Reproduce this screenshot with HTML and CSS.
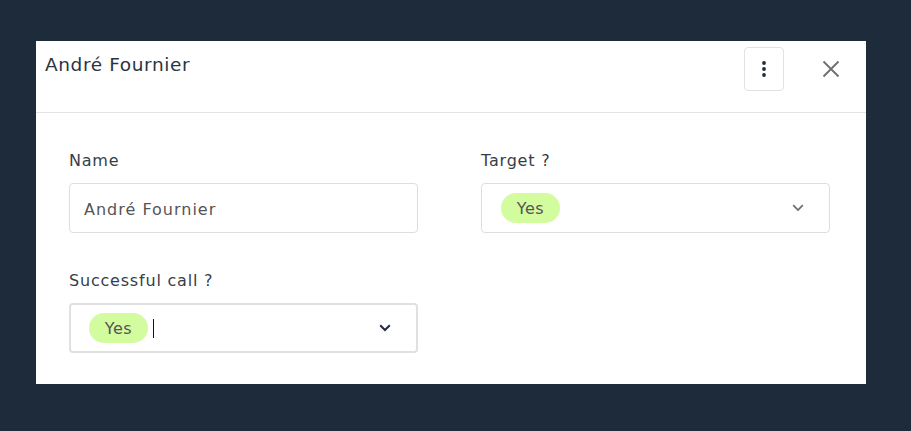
FILE: index.html
```html
<!DOCTYPE html>
<html lang="fr">
<head>
<meta charset="utf-8">
<title>André Fournier</title>
<link rel="stylesheet" href="styles.css">
</head>
<body>
<div class="modal">
  <header class="modal-header">
    <h1 class="modal-title">André Fournier</h1>
    <div class="header-actions">
      <button class="menu-btn" aria-label="More">
        <svg width="4" height="16" viewBox="0 0 4 16"><circle cx="2" cy="2" r="1.9" fill="#1f2d3d"/><circle cx="2" cy="8" r="1.9" fill="#1f2d3d"/><circle cx="2" cy="14" r="1.9" fill="#1f2d3d"/></svg>
      </button>
      <button class="close-btn" aria-label="Close">
        <svg width="18" height="18" viewBox="0 0 18 18"><path d="M1.5 1.5 L16.5 16.5 M16.5 1.5 L1.5 16.5" stroke="#6e6e6e" stroke-width="1.8" fill="none"/></svg>
      </button>
    </div>
  </header>
  <div class="modal-body">
    <div class="field">
      <label class="field-label">Name</label>
      <div class="input">André Fournier</div>
    </div>
    <div class="field">
      <label class="field-label">Target ?</label>
      <div class="input select">
        <span class="pill">Yes</span>
        <svg class="chevron" width="12" height="8" viewBox="0 0 12 8"><path d="M1.2 1.2 L6 6 L10.8 1.2" stroke="#6a6a6a" stroke-width="1.7" fill="none"/></svg>
      </div>
    </div>
    <div class="field">
      <label class="field-label">Successful call ?</label>
      <div class="input select focused">
        <span class="pill">Yes</span><span class="caret"></span>
        <svg class="chevron" width="12" height="8" viewBox="0 0 12 8"><path d="M1.2 1.2 L6 6 L10.8 1.2" stroke="#1f2d3d" stroke-width="2" fill="none"/></svg>
      </div>
    </div>
  </div>
</div>
</body>
</html>
```
FILE: styles.css
```css
* { box-sizing: border-box; }
html, body { margin: 0; padding: 0; }
body {
  background: #1e2b3a;
  font-family: "DejaVu Sans", "Inter", sans-serif;
  width: 911px;
  height: 431px;
  padding-top: 41px;
  padding-left: 36px;
}
.modal {
  width: 830px;
  height: 343px;
  background: #fff;
}
.modal-header {
  height: 72px;
  border-bottom: 1px solid #e3e3e3;
  display: flex;
  justify-content: space-between;
  align-items: flex-start;
  padding: 6px 0 0 9px;
}
.modal-title {
  margin: 0;
  margin-top: 6px;
  font-size: 18.5px;
  font-weight: 400;
  letter-spacing: 0.6px;
  color: #2a3440;
  line-height: 24px;
}
.header-actions {
  display: flex;
  align-items: flex-start;
}
.menu-btn {
  width: 40px;
  height: 44px;
  border: 1px solid #e2e2e2;
  border-radius: 4px;
  background: #fff;
  display: flex;
  align-items: center;
  justify-content: center;
  padding: 0;
}
.close-btn {
  border: 0;
  background: none;
  padding: 0;
  margin: 13px 26px 0 38px;
  width: 18px;
  height: 18px;
  display: flex;
}
.modal-body {
  display: grid;
  grid-template-columns: 349px 349px;
  column-gap: 63px;
  row-gap: 38px;
  padding: 38px 0 0 33px;
}
.field-label {
  display: block;
  font-size: 16px;
  letter-spacing: 0.8px;
  line-height: 20px;
  color: #353e49;
  margin-bottom: 12px;
}
.input {
  height: 50px;
  border: 1px solid #dedede;
  border-radius: 4px;
  display: flex;
  align-items: center;
  padding: 2px 14px 0 14px;
  font-size: 16px;
  letter-spacing: 1px;
  color: #555;
}
.select { padding-left: 19px; padding-top: 0; }
.focused { border: 2px solid #e0e0e0; padding-left: 18px; }
.pill {
  display: inline-flex;
  align-items: center;
  justify-content: center;
  height: 30px;
  width: 59px;
  border-radius: 15px;
  background: #d2fc9d;
  color: #555;
  font-size: 16px;
  letter-spacing: 0.5px;
}
.caret {
  display: inline-block;
  width: 1px;
  height: 19px;
  background: #111;
  margin-left: 5px;
}
.chevron { margin-left: auto; margin-right: 11px; }
```
